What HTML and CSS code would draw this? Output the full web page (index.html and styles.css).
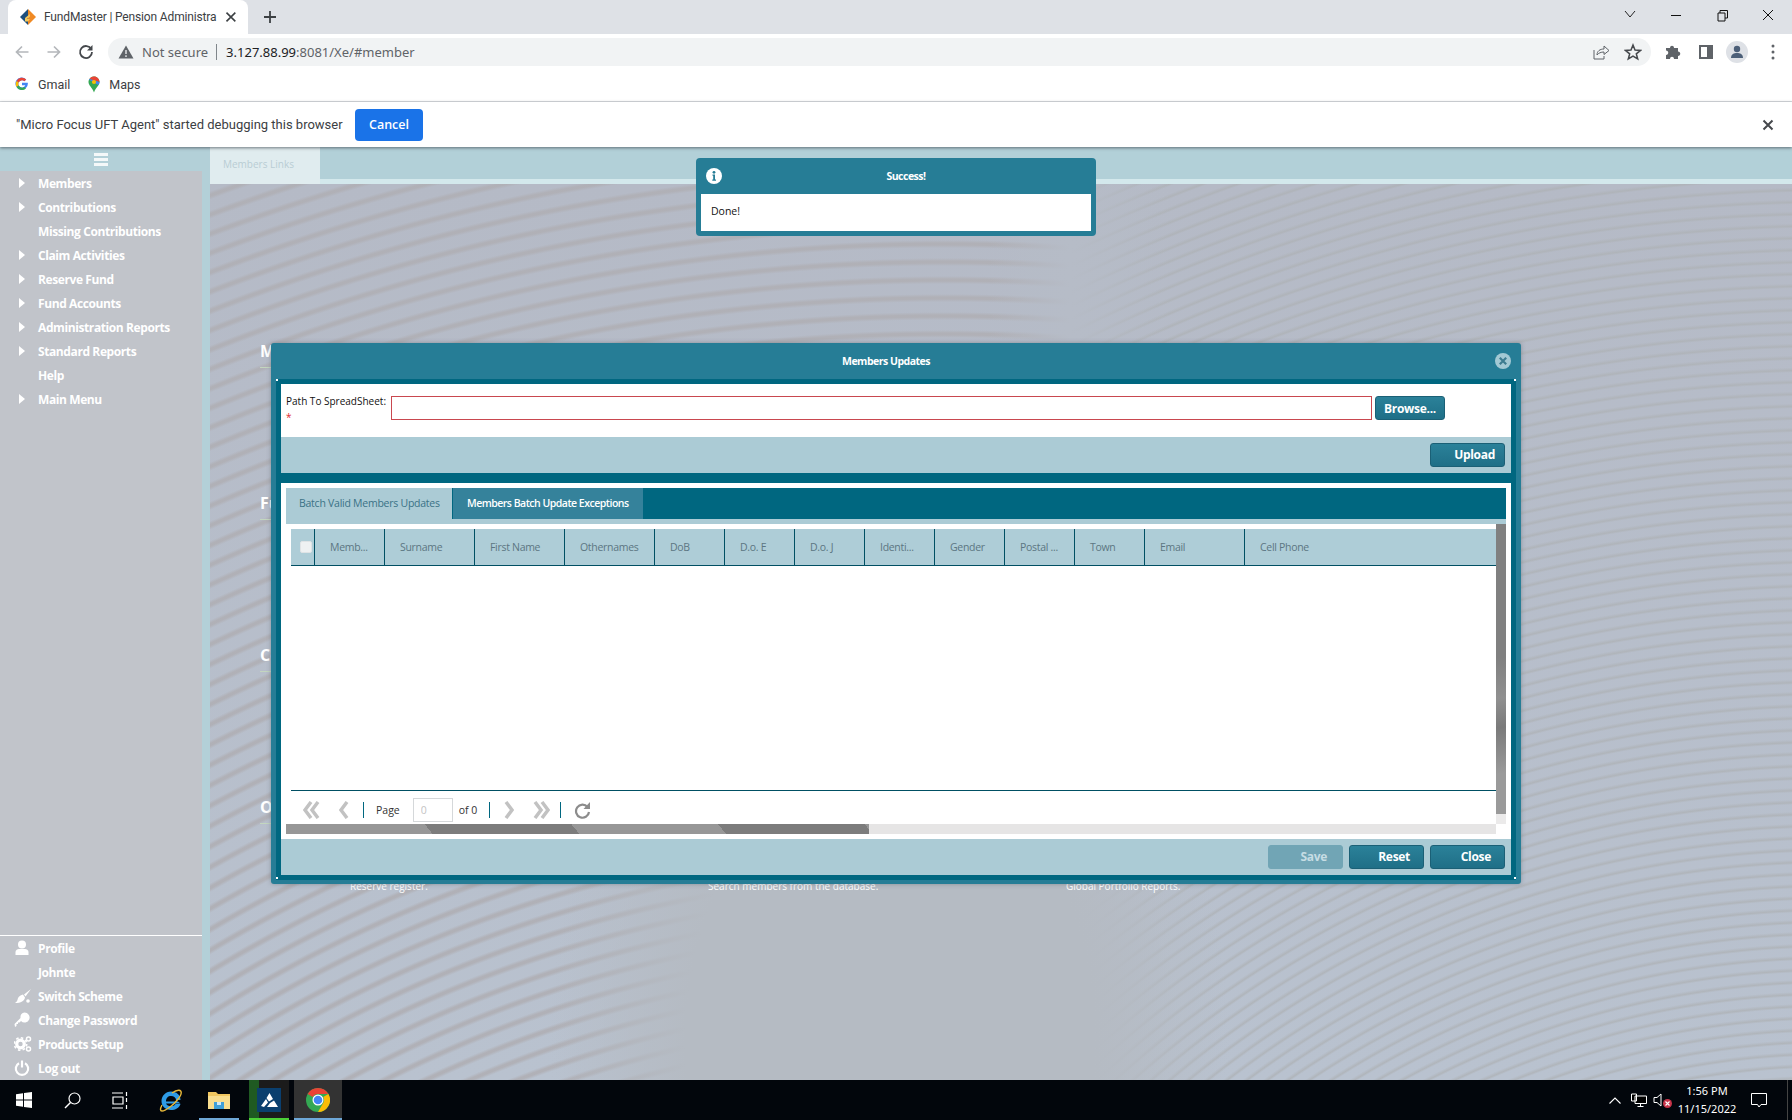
FILE: index.html
```html
<!DOCTYPE html>
<html>
<head>
    <title>FundMaster | Pension Administration</title>
    <link rel="stylesheet" href="styles.css">
</head>
<body>
<div class="screen">

    <!-- browser chrome -->
    <div class="tabstrip">
        <div class="tab">
            <svg class="favicon" width="18" height="18" viewBox="0 0 18 18"><path d="M9 1 L17 9 L9 17 Z" fill="#f08a24"/><path d="M9 1 L1 9 L9 17 Z" fill="#1d4f7c"/><path d="M6 10 L11 6 L11 8.5 L8 11 L11 11 L9 13.5 L6 13.5 Z" fill="#f4c95d"/></svg>
            <span class="tab-title">FundMaster | Pension Administra</span>
            <svg width="12" height="12" viewBox="0 0 12 12"><path d="M1.5 1.5 L10.5 10.5 M10.5 1.5 L1.5 10.5" stroke="#3c4043" stroke-width="1.6"/></svg>
        </div>
        <svg class="newtab" width="14" height="14" viewBox="0 0 14 14"><path d="M7 1 V13 M1 7 H13" stroke="#3c4043" stroke-width="1.8"/></svg>
        <div class="winctrls">
            <svg width="46" height="28" viewBox="0 0 46 28"><path d="M18 10 L23 16 L28 10" fill="none" stroke="#222" stroke-width="1"/></svg>
            <svg width="46" height="28" viewBox="0 0 46 28"><path d="M18 14.5 H28" stroke="#111" stroke-width="1"/></svg>
            <svg width="46" height="28" viewBox="0 0 46 28"><path d="M19 12 H26 V20 H19 Z M21 12 V9.500 H28.500 V17 H26" fill="none" stroke="#111" stroke-width="1"/></svg>
            <svg width="46" height="28" viewBox="0 0 46 28"><path d="M18 9 L28 19 M28 9 L18 19" stroke="#111" stroke-width="1"/></svg>
        </div>
    </div>

    <div class="toolbar">
        <svg class="navicon" width="16" height="16" viewBox="0 0 16 16"><path d="M14.500 8 H2.500 M8 2.500 L2.500 8 L8 13.500" fill="none" stroke="#b4b7bb" stroke-width="1.700"/></svg>
        <svg class="navicon" width="16" height="16" viewBox="0 0 16 16"><path d="M1.500 8 H13.500 M8 2.500 L13.500 8 L8 13.500" fill="none" stroke="#b4b7bb" stroke-width="1.700"/></svg>
        <svg class="navicon" width="16" height="16" viewBox="0 0 16 16"><path d="M13.300 5.200 A6 6 0 1 0 14 8" fill="none" stroke="#45484c" stroke-width="1.800"/><path d="M14.500 1 V6.500 H9 Z" fill="#45484c"/></svg>
        <div class="omnibox">
            <svg width="16" height="14" viewBox="0 0 16 14"><path d="M8 0.500 L15.500 13.500 H0.500 Z" fill="#5f6368"/><path d="M8 5 V9 M8 10.300 V12" stroke="#f1f3f4" stroke-width="1.300"/></svg>
            <span class="notsecure">Not secure</span>
            <span class="omni-sep"></span>
            <span class="url"><b>3.127.88.99</b>:8081/Xe/#member</span>
            <span class="omni-right">
                <svg width="18" height="18" viewBox="0 0 18 18"><path d="M2 7 V16 H12 V13" fill="none" stroke="#5f6368" stroke-width="1"/><path d="M5 12 C5 8 8 6 12 6 V3 L17 7.500 L12 11.500 V9 C9 9 6.500 10 5 12 Z" fill="none" stroke="#5f6368" stroke-width="1"/></svg>
                <svg width="18" height="18" viewBox="0 0 18 18"><path d="M9 2 L11 7 L16.500 7.400 L12.300 10.800 L13.700 16 L9 13.200 L4.300 16 L5.700 10.800 L1.500 7.400 L7 7 Z" fill="none" stroke="#45484c" stroke-width="1.500"/></svg>
            </span>
        </div>
        <div class="toolbar-right">
            <svg width="16" height="16" viewBox="0 0 16 16"><path d="M1 4 H5 C5 1 9 1 9 4 H13 V7.500 C16 7.500 16 12 13 12 V15 H9 C9 12 5 12 5 15 H1 V11 C4 11 4 6.500 1 6.500 Z" fill="#5f6368"/></svg>
            <svg width="14" height="14" viewBox="0 0 14 14"><path d="M1 1 H13 V13 H1 Z" fill="none" stroke="#5f6368" stroke-width="2"/><path d="M8 1 H13 V13 H8 Z" fill="#5f6368"/></svg>
            <span class="avatar"><svg width="14" height="14" viewBox="0 0 14 14"><circle cx="7" cy="4" r="3.200" fill="#4c5f78"/><path d="M1 13 C1 9 4 8 7 8 C10 8 13 9 13 13 Z" fill="#4c5f78"/></svg></span>
            <svg width="4" height="16" viewBox="0 0 4 16"><circle cx="2" cy="2" r="1.500" fill="#5f6368"/><circle cx="2" cy="8" r="1.500" fill="#5f6368"/><circle cx="2" cy="14" r="1.500" fill="#5f6368"/></svg>
        </div>
    </div>

    <div class="bookmarks">
        <svg width="14" height="14" viewBox="0 0 14 14"><path d="M12.800 5.800 H7 V8.300 H10.300 A3.600 3.600 0 1 1 9.400 4.200 L11.200 2.400 A6.200 6.200 0 1 0 12.800 5.800 Z" fill="#4285f4"/><path d="M1.600 4 A6.200 6.200 0 0 1 11.200 2.400 L9.400 4.200 A3.600 3.600 0 0 0 3.700 5.500 Z" fill="#ea4335"/><path d="M1.600 4 L3.700 5.500 A3.600 3.600 0 0 0 3.700 8.500 L1.600 10 A6.200 6.200 0 0 1 1.600 4 Z" fill="#fbbc05"/><path d="M1.600 10 L3.700 8.500 A3.600 3.600 0 0 0 9.200 9.900 L11 11.600 A6.200 6.200 0 0 1 1.600 10 Z" fill="#34a853"/></svg>
        <span class="bm-label">Gmail</span>
        <svg class="bm-pin" width="12" height="17" viewBox="0 0 12 17"><path d="M6 0.500 C9.200 0.500 11.500 3 11.500 6 C11.500 9.500 8 11 6 16.500 C4 11 0.500 9.500 0.500 6 C0.500 3 2.800 0.500 6 0.500 Z" fill="#34a853"/><path d="M6 0.500 C9.200 0.500 11.500 3 11.500 6 L1.500 3 C2.500 1.300 4 0.500 6 0.500 Z" fill="#ea4335"/><path d="M11.500 6 C11.500 7 11 8 10.300 9 L1 3.800 L1.500 3 Z" fill="#4285f4"/><circle cx="6" cy="6" r="2.100" fill="#fbbc05"/></svg>
        <span class="bm-label">Maps</span>
    </div>

    <div class="infobar">
        <span class="info-text">"Micro Focus UFT Agent" started debugging this browser</span>
        <button class="info-cancel">Cancel</button>
        <svg class="info-close" width="12" height="12" viewBox="0 0 12 12"><path d="M1.500 1.500 L10.500 10.500 M10.500 1.500 L1.500 10.500" stroke="#45484c" stroke-width="2"/></svg>
    </div>

    <!-- the application -->
    <div class="app">
        <div class="sidebar">
            <div class="side-head">
                <svg width="14" height="13" viewBox="0 0 14 13"><path d="M0 0 H14 V3 H0 Z M0 5 H14 V8 H0 Z M0 10 H14 V13 H0 Z" fill="#f4f8f9"/></svg>
            </div>
            <ul class="menu">
                <li class="has-sub">Members</li>
                <li class="has-sub">Contributions</li>
                <li>Missing Contributions</li>
                <li class="has-sub">Claim Activities</li>
                <li class="has-sub">Reserve Fund</li>
                <li class="has-sub">Fund Accounts</li>
                <li class="has-sub">Administration Reports</li>
                <li class="has-sub">Standard Reports</li>
                <li>Help</li>
                <li class="has-sub">Main Menu</li>
            </ul>
            <ul class="menu menu-bottom">
                <li>
                    <svg class="menu-icon" width="16" height="16" viewBox="0 0 16 16"><circle cx="8" cy="4.500" r="4" fill="#fff"/><path d="M1.500 15 V12 C1.500 10 3.500 9 5 9 H11 C12.500 9 14.500 10 14.500 12 V15 Z" fill="#fff"/></svg>
                    Profile
                </li>
                <li>Johnte</li>
                <li>
                    <svg class="menu-icon" width="18" height="16" viewBox="0 0 18 16"><path d="M17 1 L10 6.500 L11.500 8.500 Z" fill="#fff"/><path d="M9 6.500 L11 9.500 C10.500 13 7 15 1 15 C3 14 3.500 12 4 10 C5 8 7 7 9 6.500 Z" fill="#fff"/><circle cx="14" cy="13" r="1.800" fill="#fff"/></svg>
                    Switch Scheme
                </li>
                <li>
                    <svg class="menu-icon" width="16" height="16" viewBox="0 0 16 16"><path d="M10.500 0.500 A5 5 0 1 1 7 9 L5.500 10.500 H4 V12 H2.500 V14 L1 15 L0.500 12 L6.500 6 A5 5 0 0 1 10.500 0.500 Z" fill="#fff"/></svg>
                    Change Password
                </li>
                <li>
                    <svg class="menu-icon" width="18" height="16" viewBox="0 0 18 16"><circle cx="6.500" cy="8" r="3.800" fill="none" stroke="#fff" stroke-width="3.200"/><circle cx="6.500" cy="8" r="6.200" fill="none" stroke="#fff" stroke-width="1.600" stroke-dasharray="2.500 2.300"/><circle cx="14.500" cy="3" r="2" fill="none" stroke="#fff" stroke-width="1.500"/><circle cx="14.500" cy="13" r="2" fill="none" stroke="#fff" stroke-width="1.500"/></svg>
                    Products Setup
                </li>
                <li>
                    <svg class="menu-icon" width="16" height="16" viewBox="0 0 16 16"><path d="M5 3.200 A6.200 6.200 0 1 0 11 3.200" fill="none" stroke="#fff" stroke-width="2.200"/><path d="M8 0.500 V7.500" stroke="#fff" stroke-width="2.200"/></svg>
                    Log out
                </li>
            </ul>
        </div>

        <div class="content">
            <div class="tabbar"><div class="links-tab">Members Links</div></div>
            <div class="links-page">
                <div class="links-section"><h3>Members</h3><div class="section-rule"></div></div>
                <div class="links-section"><h3>Fund</h3><div class="section-rule"></div></div>
                <div class="links-section"><h3>Contributions</h3><div class="section-rule"></div></div>
                <div class="links-section">
                    <h3>Other</h3>
                    <div class="section-rule"></div>
                    <div class="link-row">
                        <span>Reserve register.</span>
                        <span>Search members from the database.</span>
                        <span>Global Portfolio Reports.</span>
                    </div>
                </div>
            </div>
        </div>

        <!-- success notification -->
        <div class="notice">
            <div class="notice-head">
                <svg class="notice-icon" width="16" height="16" viewBox="0 0 16 16"><circle cx="8" cy="8" r="8" fill="#fff"/><path d="M6.500 6.500 H9 V11.500 H10 V12.800 H6.300 V11.500 H7.200 V7.800 H6.500 Z" fill="#267d96"/><circle cx="8" cy="4.300" r="1.400" fill="#267d96"/></svg>
                Success!
            </div>
            <div class="notice-body">Done!</div>
        </div>

        <!-- upload window -->
        <div class="dialog">
            <div class="dialog-title">
                Members Updates
                <svg class="dialog-close" width="16" height="16" viewBox="0 0 16 16"><circle cx="8" cy="8" r="8" fill="#a3c9d4"/><path d="M4.800 4.800 L11.200 11.200 M11.200 4.800 L4.800 11.200" stroke="#3d7c90" stroke-width="2.200"/></svg>
            </div>
            <div class="dialog-inner">
                <div class="upload-form">
                    <div class="field-label">Path To SpreadSheet:<br><span class="req">*</span></div>
                    <input class="path-input" type="text">
                    <button class="btn btn-browse">Browse...</button>
                </div>
                <div class="band band-upload"><button class="btn btn-upload">Upload</button></div>
                <div class="divider"></div>
                <div class="batch-panel">
                    <div class="batch-tabs">
                        <div class="batch-tab active">Batch Valid Members Updates</div>
                        <div class="batch-tab">Members Batch Update Exceptions</div>
                    </div>
                    <div class="grid-wrap">
                        <div class="grid">
                            <div class="grid-head">
                                <div class="col col-check"><span class="checkbox"></span></div>
                                <div class="col w70">Memb...</div>
                                <div class="col w90">Surname</div>
                                <div class="col w90">First Name</div>
                                <div class="col w90">Othernames</div>
                                <div class="col w70">DoB</div>
                                <div class="col w70">D.o. E</div>
                                <div class="col w70">D.o. J</div>
                                <div class="col w70">Identi...</div>
                                <div class="col w70">Gender</div>
                                <div class="col w70">Postal ...</div>
                                <div class="col w70">Town</div>
                                <div class="col w100">Email</div>
                                <div class="col last">Cell Phone</div>
                            </div>
                            <div class="grid-body"></div>
                            <div class="pager">
                                <svg class="pg-first" width="17" height="18" viewBox="0 0 17 18"><path d="M8 1 L2 9 L8 17 M15 1 L9 9 L15 17" fill="none" stroke="#c2c2c2" stroke-width="3.500"/></svg>
                                <svg class="pg-prev" width="10" height="18" viewBox="0 0 10 18"><path d="M8 1 L2 9 L8 17" fill="none" stroke="#c2c2c2" stroke-width="3.500"/></svg>
                                <span class="pg-sep"></span>
                                <span class="pg-label">Page</span>
                                <input class="pg-input" type="text" value="0">
                                <span class="pg-of">of 0</span>
                                <span class="pg-sep"></span>
                                <svg class="pg-next" width="10" height="18" viewBox="0 0 10 18"><path d="M2 1 L8 9 L2 17" fill="none" stroke="#c2c2c2" stroke-width="3.500"/></svg>
                                <svg class="pg-last" width="17" height="18" viewBox="0 0 17 18"><path d="M2 1 L8 9 L2 17 M9 1 L15 9 L9 17" fill="none" stroke="#c2c2c2" stroke-width="3.500"/></svg>
                                <span class="pg-sep"></span>
                                <svg class="pg-reload" width="17" height="18" viewBox="0 0 17 18"><path d="M13.500 6 A6.500 6.500 0 1 0 15 11" fill="none" stroke="#8c8c8c" stroke-width="2.200"/><path d="M16 1 V8 H9.500 Z" fill="#8c8c8c"/></svg>
                            </div>
                        </div>
                        <div class="vscroll"><div class="vthumb"></div></div>
                    </div>
                    <div class="hscroll"><div class="hthumb"></div></div>
                </div>
                <div class="band band-actions">
                    <button class="btn btn-off">Save</button>
                    <button class="btn">Reset</button>
                    <button class="btn">Close</button>
                </div>
            </div>
            <span class="grip grip-tl"></span>
            <span class="grip grip-tr"></span>
            <span class="grip grip-bl"></span>
            <span class="grip grip-br"></span>
        </div>
    </div>

    <!-- windows taskbar -->
    <div class="taskbar">
        <div class="task-slot">
            <svg width="16" height="16" viewBox="0 0 16 16"><path d="M0 2.300 L7 1.300 V7.500 H0 Z M8 1.100 L16 0 V7.500 H8 Z M0 8.500 H7 V14.700 L0 13.700 Z M8 8.500 H16 V16 L8 14.900 Z" fill="#fff"/></svg>
        </div>
        <div class="task-slot">
            <svg width="17" height="17" viewBox="0 0 17 17"><circle cx="10.500" cy="6.500" r="5.500" fill="none" stroke="#fff" stroke-width="1.200"/><path d="M6.500 10.500 L1 16" stroke="#fff" stroke-width="1.400"/></svg>
        </div>
        <div class="task-slot">
            <svg width="17" height="17" viewBox="0 0 17 17"><path d="M0 1 H11 M0 16 H11 M1 5 H11 V12 H1 Z M14.500 0 V4 M14.500 6 V10 M14.500 13 V17" fill="none" stroke="#fff" stroke-width="1.200"/></svg>
        </div>
        <div class="task-slot is-ie">
            <svg width="24" height="23" viewBox="0 0 24 23"><path d="M19 12.500 H7 C7 9 9 7 12 7 C15 7 17 9 17 11 H21.500 C21.500 6 17.500 2.500 12 2.500 C6.500 2.500 2.500 7 2.500 12 C2.500 17.500 6.500 21 12 21 C16.500 21 20 19 21.500 15 H16.500 C15.500 16.500 14 17.200 12 17.200 C9.500 17.200 7.500 16 7 14.500 H21.500 Z" fill="#2e9be6"/><path d="M3 16 C1 20 1 22 3 22 C6 22 14 17 20 9 C23 5 23 1.500 20 1.200 C18 1 15 2.500 13 4" fill="none" stroke="#e8b93a" stroke-width="1.400"/></svg>
        </div>
        <div class="task-slot is-running">
            <svg width="22" height="18" viewBox="0 0 22 18"><path d="M0 1 H8 L10 3 H22 V18 H0 Z" fill="#f0c660"/><path d="M0 5 H22 V18 H0 Z" fill="#f8dd8e"/><path d="M6 11 H16 V18 H6 Z" fill="#3f9fd8"/><path d="M9 11 H13 V14 H9 Z" fill="#cfe8f6"/></svg>
        </div>
        <div class="task-slot is-app">
            <span class="app-square"><svg width="17" height="15" viewBox="0 0 17 15"><path d="M8.500 0 L12 6 L8 8.500 L5.500 5 Z M5 6 L7 9.500 L3 14 L0 13 Z M9 10 L13 7.500 L17 14 H6 Z" fill="#fff"/></svg></span>
        </div>
        <div class="task-slot is-chrome">
            <svg width="24" height="24" viewBox="0 0 24 24"><circle cx="12" cy="12" r="12" fill="#34a853"/><path d="M12 0 A12 12 0 0 1 22.400 6 H12 A6 6 0 0 0 6.800 9 L1.600 6 A12 12 0 0 1 12 0 Z" fill="#ea4335"/><path d="M22.400 6 A12 12 0 0 1 12 24 L17.200 15 A6 6 0 0 0 17.200 9 Z" fill="#fbbc05"/><circle cx="12" cy="12" r="5.500" fill="#fff"/><circle cx="12" cy="12" r="4.300" fill="#4285f4"/></svg>
        </div>
        <div class="tray">
            <svg class="tray-chevron" width="12" height="7" viewBox="0 0 12 7"><path d="M0.500 6.500 L6 1 L11.500 6.500" fill="none" stroke="#fff" stroke-width="1.100"/></svg>
            <svg width="16" height="14" viewBox="0 0 16 14"><path d="M4 3 H15.500 V10.500 H4 Z M9.500 10.500 V13 M6.500 13.500 H12.500 M0.500 1 H5.500 V8 H0.500 Z" fill="#000" stroke="#fff" stroke-width="1"/></svg>
            <span class="speaker">
                <svg width="12" height="14" viewBox="0 0 12 14"><path d="M1 4.500 H4 L8 1 V13 L4 9.500 H1 Z" fill="none" stroke="#fff" stroke-width="1"/></svg>
                <svg class="mute" width="9" height="9" viewBox="0 0 9 9"><circle cx="4.500" cy="4.500" r="4.500" fill="#c8344a"/><path d="M2.500 2.500 L6.500 6.500 M6.500 2.500 L2.500 6.500" stroke="#fff" stroke-width="1.100"/></svg>
            </span>
            <div class="clock">1:56 PM<br>11/15/2022</div>
            <svg class="notif" width="16" height="15" viewBox="0 0 16 15"><path d="M0.500 0.500 H15.500 V11.500 H10 L8 14 L6.500 11.500 H0.500 Z" fill="none" stroke="#fff" stroke-width="1"/></svg>
        </div>
    </div>
</div>
</body>
</html>
```

FILE: styles.css
```css
*{
    box-sizing: border-box;
}
html, body{
    margin: 0;
    padding: 0;
    overflow: hidden;
}
body{
    font-family: "Open Sans", "Noto Sans", sans-serif;
}
ul{
    list-style: none;
    margin: 0;
    padding: 0;
}
button{
    font-family: inherit;
    border: none;
}
.screen{
    width: 1792px;
    height: 1120px;
    display: flex;
    flex-direction: column;
}

/* browser chrome */
.tabstrip{
    height: 34px;
    background-color: #dee1e6;
    display: flex;
    align-items: center;
    padding-left: 8px;
}
.tab{
    width: 240px;
    height: 34px;
    background-color: #fff;
    border-radius: 8px 8px 0 0;
    display: flex;
    align-items: center;
    padding: 0 11px;
}
.favicon{
    flex: none;
}
.tab-title{
    font-family: Roboto, sans-serif;
    font-size: 12px;
    letter-spacing: -0.150px;
    color: #3c4043;
    margin-left: 7px;
    width: 177px;
    white-space: nowrap;
}
.tab svg:last-child{
    margin-left: 7px;
}
.newtab{
    margin-left: 15px;
}
.winctrls{
    margin-left: auto;
    display: flex;
    padding-right: 1px;
    margin-top: -5px;
}
.toolbar{
    height: 36px;
    background-color: #fff;
    display: flex;
    align-items: center;
    padding: 0 0 0 14px;
}
.navicon{
    flex: none;
    margin-right: 16px;
}
.omnibox{
    width: 1543px;
    height: 28px;
    margin-left: -2px;
    background-color: #f1f3f4;
    border-radius: 14px;
    display: flex;
    align-items: center;
    padding-left: 10px;
    font-size: 13px;
    font-family: "Noto Sans", sans-serif;
}
.notsecure{
    color: #5f6368;
    margin-left: 8px;
}
.omni-sep{
    width: 1px;
    height: 16px;
    background-color: #80868b;
    margin: 0 9px 0 8px;
}
.url{
    color: #5f6368;
}
.url b{
    color: #202124;
    font-weight: normal;
}
.omni-right{
    margin-left: auto;
    display: flex;
    gap: 14px;
    padding-right: 9px;
}
.toolbar-right{
    display: flex;
    align-items: center;
    margin-left: 14px;
    gap: 18px;
}
.avatar{
    width: 22px;
    height: 22px;
    border-radius: 50%;
    background-color: #dee1e6;
    display: flex;
    align-items: center;
    justify-content: center;
    margin: 0 5px 0 -5px;
}
.bookmarks{
    height: 32px;
    background-color: #fff;
    border-bottom: 1px solid #dadce0;
    display: flex;
    align-items: center;
    padding: 0 0 3px 15px;
    font-size: 12.500px;
    color: #3c4043;
    font-family: Roboto, sans-serif;
}
.bm-label{
    margin-left: 9px;
}
.bm-pin{
    margin-left: 18px;
}
.infobar{
    height: 45px;
    background-color: #fff;
    display: flex;
    align-items: center;
    padding-left: 16px;
    box-shadow: 0 1px 3px rgba(60, 70, 75, 0.7);
    position: relative;
    z-index: 3;
}
.info-text{
    font-size: 13px;
    color: #3c4043;
    font-family: Roboto, sans-serif;
    width: 339px;
    white-space: nowrap;
}
.info-cancel{
    width: 68px;
    height: 32px;
    background-color: #1a73e8;
    color: #fff;
    border-radius: 4px;
    font-size: 12.500px;
    font-weight: 600;
}
.info-close{
    margin-left: auto;
    margin-right: 18px;
}

/* application */
.app{
    position: relative;
    height: 933px;
    display: flex;
}
.sidebar{
    width: 210px;
    flex: none;
    background-color: #c1c4ca;
    border-right: 8px solid #b3d0d8;
    display: flex;
    flex-direction: column;
    color: #fff;
    font-size: 12px;
    font-weight: 700;
    letter-spacing: -0.400px;
}
.side-head{
    height: 24px;
    background-color: #b3d0d8;
    display: flex;
    align-items: center;
    justify-content: center;
}
.menu li{
    height: 24px;
    display: flex;
    align-items: center;
    padding-left: 38px;
    position: relative;
}
.has-sub::before{
    content: "";
    position: absolute;
    left: 19px;
    top: 7px;
    border-left: 6px solid #fff;
    border-top: 5px solid transparent;
    border-bottom: 5px solid transparent;
}
.menu-bottom{
    margin-top: auto;
    border-top: 1px solid #fff;
}
.menu-icon{
    position: absolute;
    left: 14px;
    top: 4px;
}
.content{
    flex: 1;
    display: flex;
    flex-direction: column;
}
.tabbar{
    height: 37px;
    background-color: #b2d0d8;
    border-bottom: 5px solid #d3e8ec;
    display: flex;
}
.links-tab{
    width: 110px;
    height: 37px;
    background-color: #e0ecef;
    color: #b9cdd4;
    font-size: 10px;
    padding: 10px 0 0 13px;
}
.links-page{
    flex: 1;
    padding: 157px 0 0 50px;
    color: #fff;
    background-color: #b6bcc7;
    background-image:
        radial-gradient(ellipse 340px 480px at 680px 860px, #b5bbc3 60%, rgba(181, 187, 195, 0) 100%),
        linear-gradient(90deg, rgba(182, 188, 199, 0) 780px, #b6bcc7 860px, rgba(182, 188, 199, 0) 960px),
        repeating-radial-gradient(circle at 735px 2000px, rgba(176, 176, 182, 0) 0, rgba(176, 176, 182, 0) 10px, rgba(176, 176, 182, 0.95) 13px, rgba(176, 176, 182, 0.95) 15px, rgba(176, 176, 182, 0) 18px),
        repeating-radial-gradient(circle at 763px 1683px, rgba(174, 178, 182, 0) 0, rgba(174, 178, 182, 0) 7px, rgba(174, 178, 182, 0.8) 9px, rgba(174, 178, 182, 0) 12px),
        linear-gradient(#b5bac6, #b9c2cf);
    background-size: 100% 100%, 100% 100%, 860px 100%, 722px 100%, 100% 100%;
    background-position: 0 0, 0 0, 0 0, 100% 0, 0 0;
    background-repeat: no-repeat;
}
.links-section{
    height: 152px;
}
.links-section h3{
    margin: 0;
    font-size: 16px;
    line-height: 20px;
    font-weight: 700;
    white-space: nowrap;
}
.section-rule{
    width: 60px;
    height: 1px;
    background-color: #c3d6bf;
    margin-top: 6px;
}
.link-row{
    display: flex;
    font-size: 10px;
    font-weight: 400;
    margin: 55px 0 0 90px;
}
.link-row span:nth-child(1){
    width: 358px;
}
.link-row span:nth-child(2){
    width: 358px;
}

/* success notification */
.notice{
    position: absolute;
    left: 696px;
    top: 11px;
    width: 400px;
    height: 78px;
    background-color: #267d96;
    border-radius: 4px;
    padding: 0 5px 5px;
    z-index: 5;
    display: flex;
    flex-direction: column;
}
.notice-head{
    height: 36px;
    color: #fff;
    font-size: 10.500px;
    font-weight: 700;
    letter-spacing: -0.500px;
    display: flex;
    align-items: center;
    justify-content: center;
    position: relative;
    padding-left: 20px;
}
.notice-icon{
    position: absolute;
    left: 5px;
    top: 10px;
}
.notice-body{
    flex: 1;
    background-color: #fff;
    color: #111;
    font-size: 10.500px;
    padding: 10px;
}

/* upload window */
.dialog{
    position: absolute;
    left: 271px;
    top: 196px;
    width: 1250px;
    height: 541px;
    background-color: #267d96;
    border-radius: 3px;
    padding: 0 5px 5px;
    box-shadow: 0 0 4px rgba(90, 100, 110, 0.5);
    z-index: 4;
    display: flex;
    flex-direction: column;
}
.dialog-title{
    height: 36px;
    flex: none;
    color: #fff;
    font-size: 10.500px;
    font-weight: 700;
    letter-spacing: -0.500px;
    display: flex;
    align-items: center;
    justify-content: center;
    position: relative;
    padding-right: 20px;
}
.dialog-close{
    position: absolute;
    right: 5px;
    top: 10px;
}
.dialog-inner{
    flex: 1;
    border: 5px solid #006780;
    background-color: #fff;
    display: flex;
    flex-direction: column;
}
.upload-form{
    height: 53px;
    flex: none;
    padding: 12px 0 0 5px;
    display: flex;
    align-items: flex-start;
}
.field-label{
    width: 105px;
    margin-top: -3px;
    font-size: 10px;
    line-height: 16px;
    color: #111;
    white-space: nowrap;
}
.req{
    color: #e0272f;
}
.path-input{
    width: 981px;
    height: 24px;
    border: 1px solid #c9484f;
    background-color: #fff;
    margin-right: 3px;
    outline: none;
}
.btn{
    width: 75px;
    height: 24px;
    background: linear-gradient(#2b8199, #1f6f87);
    border: 1px solid #1b6076;
    border-radius: 3px;
    color: #fff;
    font-size: 12px;
    font-weight: 700;
    letter-spacing: -0.300px;
    padding: 0 13px 1px 0;
    text-align: right;
}
.btn-browse{
    width: 70px;
    padding: 0;
    text-align: center;
}
.btn-upload{
    padding-right: 9px;
}
.btn-off{
    background: #71a5b5;
    border-color: #71a5b5;
    color: #c6dde4;
    padding-right: 15px;
}
.band{
    height: 36px;
    flex: none;
    background-color: #abcbd5;
    display: flex;
    align-items: center;
    justify-content: flex-end;
    padding-right: 6px;
    gap: 6px;
}
.divider{
    height: 10px;
    flex: none;
    background-color: #006780;
}
.batch-panel{
    flex: 1;
    padding: 5px;
    display: flex;
    flex-direction: column;
}
.batch-tabs{
    height: 36px;
    flex: none;
    background-color: #006780;
    border-bottom: 5px solid #abcbd5;
    display: flex;
    font-size: 10.500px;
}
.batch-tab{
    height: 31px;
    width: 190px;
    background-color: #35829b;
    color: #fff;
    font-weight: 600;
    letter-spacing: -0.500px;
    line-height: 31px;
    padding-left: 14px;
    white-space: nowrap;
}
.batch-tab.active{
    width: 166px;
    height: 36px;
    margin-right: 1px;
    background-color: #abcbd5;
    color: #3a7286;
    font-weight: 400;
    letter-spacing: -0.250px;
    padding-left: 13px;
    line-height: 31px;
}
.grid-wrap{
    height: 300px;
    flex: none;
    display: flex;
}
.grid{
    flex: 1;
    padding: 5px 0 0 5px;
    display: flex;
    flex-direction: column;
}
.grid-head{
    height: 37px;
    flex: none;
    background-color: #aecdd7;
    border-bottom: 1px solid #004f63;
    display: flex;
    font-size: 10.500px;
    letter-spacing: -0.300px;
    color: #5c7682;
}
.col{
    border-right: 1px solid #004f63;
    padding-left: 15px;
    line-height: 36px;
    white-space: nowrap;
    overflow: hidden;
}
.col-check{
    width: 24px;
    padding-left: 7px;
    display: flex;
    align-items: center;
    justify-content: center;
}
.checkbox{
    width: 12px;
    height: 12px;
    background-color: #eef1f2;
    border: 1px solid #dfe3e5;
    border-radius: 2px;
}
.w70{
    width: 70px;
}
.w90{
    width: 90px;
}
.w100{
    width: 100px;
}
.last{
    flex: 1;
    border-right: none;
}
.grid-body{
    flex: 1;
    border-bottom: 1px solid #004f63;
}
.pager{
    height: 33px;
    flex: none;
    display: flex;
    align-items: center;
    padding-top: 4px;
    font-size: 10.500px;
    color: #333;
}
.pg-first{
    margin-left: 12px;
}
.pg-prev{
    margin: 0 14px 0 19px;
}
.pg-sep{
    width: 1px;
    height: 16px;
    background-color: #006780;
}
.pg-label{
    margin: 0 13px 0 12px;
}
.pg-input{
    width: 40px;
    height: 24px;
    border: 1px solid #d5d8da;
    font-size: 10.500px;
    font-family: inherit;
    color: #c4c4c4;
    padding-left: 7px;
    outline: none;
}
.pg-of{
    margin: 0 12px 0 6px;
}
.pg-next{
    margin-left: 14px;
}
.pg-last{
    margin: 0 10px 0 19px;
}
.pg-reload{
    margin-left: 13px;
}
.vscroll{
    width: 10px;
    flex: none;
    display: flex;
    flex-direction: column;
    background-color: #ebeaea;
}
.vthumb{
    height: 290px;
    background: linear-gradient(172deg, #808080 0, #808080 46%, #909090 60%, #7a7a7a 70%, #9a9a9a 86%, #9a9a9a 100%);
}
.hscroll{
    height: 10px;
    width: 1210px;
    flex: none;
    background-color: #e6e5e5;
}
.hthumb{
    width: 583px;
    height: 10px;
    background-image: repeating-linear-gradient(51deg, #979797 0, #979797 114px, #7c7c7c 114px, #7c7c7c 228px);
}
.grip{
    position: absolute;
    width: 2px;
    height: 2px;
    background-color: #fff;
}
.grip-tl{
    left: 5px;
    top: 36px;
}
.grip-tr{
    right: 5px;
    top: 36px;
}
.grip-bl{
    left: 5px;
    bottom: 5px;
}
.grip-br{
    right: 5px;
    bottom: 5px;
}

/* windows taskbar */
.taskbar{
    height: 40px;
    background-color: #02060c;
    display: flex;
    align-items: center;
    position: relative;
    z-index: 3;
}
.task-slot{
    width: 48px;
    height: 40px;
    display: flex;
    align-items: center;
    justify-content: center;
    flex: none;
}
.is-ie{
    margin-left: 3px;
}
.is-running{
    box-shadow: inset 0 -2px 0 #6ea8d8;
    width: 40px;
    margin: 0 4px;
}
.is-app{
    width: 40px;
    margin-left: 6px;
    background: linear-gradient(90deg, #1f5a22 0, #1f5a22 10px, #1b1b1b 10px);
    box-shadow: inset 0 -2px 0 #4cd137;
}
.app-square{
    width: 24px;
    height: 24px;
    background-color: #0a3f6e;
    display: flex;
    align-items: center;
    justify-content: center;
}
.is-chrome{
    margin-left: 5px;
    background-color: #333;
    box-shadow: inset 0 -2px 0 #6ea8d8;
}
.tray{
    margin-left: auto;
    display: flex;
    align-items: center;
    color: #fff;
    height: 40px;
    padding-right: 20px;
    border-right: 1px solid #444;
    margin-right: 4px;
}
.tray-chevron{
    margin-right: 10px;
}
.speaker{
    position: relative;
    margin-left: 6px;
    display: flex;
    width: 24px;
}
.mute{
    position: absolute;
    left: 10px;
    top: 6px;
}
.clock{
    font-size: 11px;
    line-height: 18px;
    text-align: center;
    width: 60px;
    font-family: "Noto Sans", sans-serif;
}
.notif{
    margin-left: 14px;
}
```
